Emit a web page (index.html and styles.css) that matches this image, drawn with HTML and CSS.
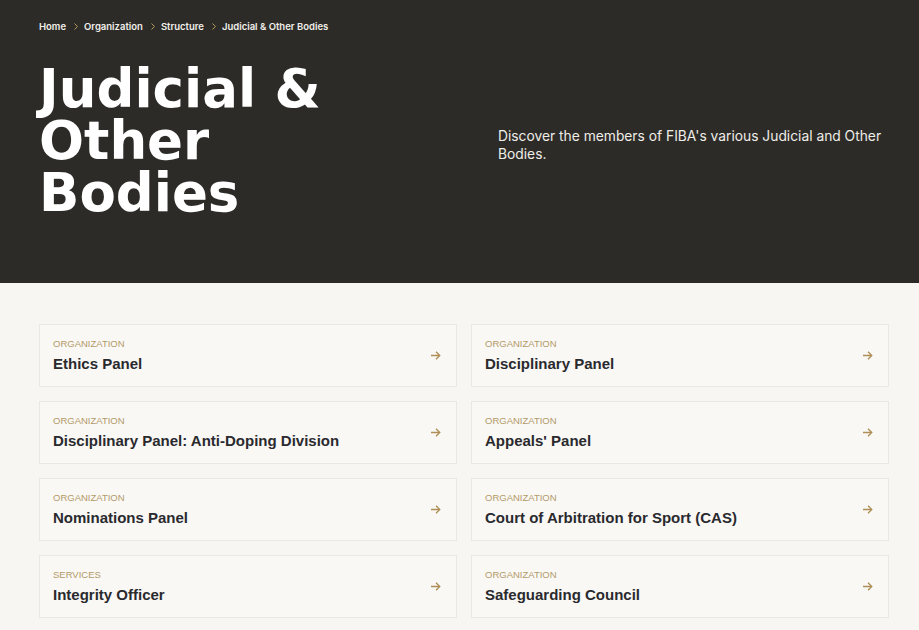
FILE: index.html
```html
<!DOCTYPE html>
<html lang="en">
<head>
  <meta charset="UTF-8" />
  <meta name="viewport" content="width=device-width, initial-scale=1.0"/>
  <title>Judicial &amp; Other Bodies</title>
  <link rel="stylesheet" href="styles.css">
</head>
<body>

  <header class="hero">
    <nav class="crumbs">
      <a href="#">Home</a>
      <svg class="sep" width="4" height="7" viewBox="0 0 4 7"><path d="M0.5 0.5 L3.5 3.5 L0.5 6.5" fill="none" stroke="currentColor" stroke-width="1"/></svg>
      <a href="#">Organization</a>
      <svg class="sep" width="4" height="7" viewBox="0 0 4 7"><path d="M0.5 0.5 L3.5 3.5 L0.5 6.5" fill="none" stroke="currentColor" stroke-width="1"/></svg>
      <a href="#">Structure</a>
      <svg class="sep" width="4" height="7" viewBox="0 0 4 7"><path d="M0.5 0.5 L3.5 3.5 L0.5 6.5" fill="none" stroke="currentColor" stroke-width="1"/></svg>
      <span>Judicial &amp; Other Bodies</span>
    </nav>
    <div class="hero-row">
      <h1>Judicial &amp;<br>Other<br>Bodies</h1>
      <p class="intro">Discover the members of FIBA's various Judicial and Other Bodies.</p>
    </div>
  </header>

  <main class="bodies">
    <a class="card" href="#">
      <div>
        <div class="kind">Organization</div>
        <div class="name">Ethics Panel</div>
      </div>
      <svg class="arrow" width="10" height="9" viewBox="0 0 10 9"><path d="M0 4.5 H9 M5 0.8 L8.8 4.5 L5 8.2" fill="none" stroke="currentColor" stroke-width="1.3"/></svg>
    </a>
    <a class="card" href="#">
      <div>
        <div class="kind">Organization</div>
        <div class="name">Disciplinary Panel</div>
      </div>
      <svg class="arrow" width="10" height="9" viewBox="0 0 10 9"><path d="M0 4.5 H9 M5 0.8 L8.8 4.5 L5 8.2" fill="none" stroke="currentColor" stroke-width="1.3"/></svg>
    </a>
    <a class="card" href="#">
      <div>
        <div class="kind">Organization</div>
        <div class="name">Disciplinary Panel: Anti-Doping Division</div>
      </div>
      <svg class="arrow" width="10" height="9" viewBox="0 0 10 9"><path d="M0 4.5 H9 M5 0.8 L8.8 4.5 L5 8.2" fill="none" stroke="currentColor" stroke-width="1.3"/></svg>
    </a>
    <a class="card" href="#">
      <div>
        <div class="kind">Organization</div>
        <div class="name">Appeals' Panel</div>
      </div>
      <svg class="arrow" width="10" height="9" viewBox="0 0 10 9"><path d="M0 4.5 H9 M5 0.8 L8.8 4.5 L5 8.2" fill="none" stroke="currentColor" stroke-width="1.3"/></svg>
    </a>
    <a class="card" href="#">
      <div>
        <div class="kind">Organization</div>
        <div class="name">Nominations Panel</div>
      </div>
      <svg class="arrow" width="10" height="9" viewBox="0 0 10 9"><path d="M0 4.5 H9 M5 0.8 L8.8 4.5 L5 8.2" fill="none" stroke="currentColor" stroke-width="1.3"/></svg>
    </a>
    <a class="card" href="#">
      <div>
        <div class="kind">Organization</div>
        <div class="name">Court of Arbitration for Sport (CAS)</div>
      </div>
      <svg class="arrow" width="10" height="9" viewBox="0 0 10 9"><path d="M0 4.5 H9 M5 0.8 L8.8 4.5 L5 8.2" fill="none" stroke="currentColor" stroke-width="1.3"/></svg>
    </a>
    <a class="card" href="#">
      <div>
        <div class="kind">Services</div>
        <div class="name">Integrity Officer</div>
      </div>
      <svg class="arrow" width="10" height="9" viewBox="0 0 10 9"><path d="M0 4.5 H9 M5 0.8 L8.8 4.5 L5 8.2" fill="none" stroke="currentColor" stroke-width="1.3"/></svg>
    </a>
    <a class="card" href="#">
      <div>
        <div class="kind">Organization</div>
        <div class="name">Safeguarding Council</div>
      </div>
      <svg class="arrow" width="10" height="9" viewBox="0 0 10 9"><path d="M0 4.5 H9 M5 0.8 L8.8 4.5 L5 8.2" fill="none" stroke="currentColor" stroke-width="1.3"/></svg>
    </a>
  </main>

</body>
</html>
```

FILE: styles.css
```css
body {
  margin: 0;
  font-family: "Liberation Sans", Arial, sans-serif;
  background: #f8f6f2;
  color: #26262a;
}
a {
  color: inherit;
  text-decoration: none;
}
.hero {
  background: #2d2b27;
  color: #fff;
  height: 283px;
  padding: 20px 20px 0 39px;
  box-sizing: border-box;
}
.crumbs {
  font-family: Inter, "Liberation Sans", sans-serif;
  font-size: 9.5px;
  font-weight: 600;
  display: flex;
  align-items: center;
  color: #f1efea;
  height: 13px;
}
.crumbs .sep {
  color: #b8975c;
  margin: 0 6px 0 8px;
}
.hero-row {
  display: flex;
  margin-top: 30px;
}
h1 {
  margin: 0;
  flex: 0 0 459px;
  font-family: "DejaVu Sans", "Liberation Sans", sans-serif;
  font-size: 53px;
  font-weight: bold;
  line-height: 52px;
}
.intro {
  margin: 64px 0 0;
  flex: 1;
  font-family: Inter, "Liberation Sans", sans-serif;
  font-size: 13.8px;
  line-height: 18px;
  color: #efede8;
}
.bodies {
  display: grid;
  grid-template-columns: 418px 418px;
  gap: 14px;
  padding: 41px 39px;
}
.card {
  display: flex;
  align-items: center;
  justify-content: space-between;
  height: 63px;
  box-sizing: border-box;
  padding: 0 15px 2px 13px;
  border: 1px solid #ebe8e2;
  background: #f9f8f5;
}
.kind {
  font-size: 9.5px;
  text-transform: uppercase;
  color: #b49a68;
  margin-bottom: 6px;
}
.name {
  font-size: 15px;
  font-weight: bold;
  color: #2a2a2e;
}
.arrow {
  color: #b08e55;
  margin-top: 1px;
}
```
